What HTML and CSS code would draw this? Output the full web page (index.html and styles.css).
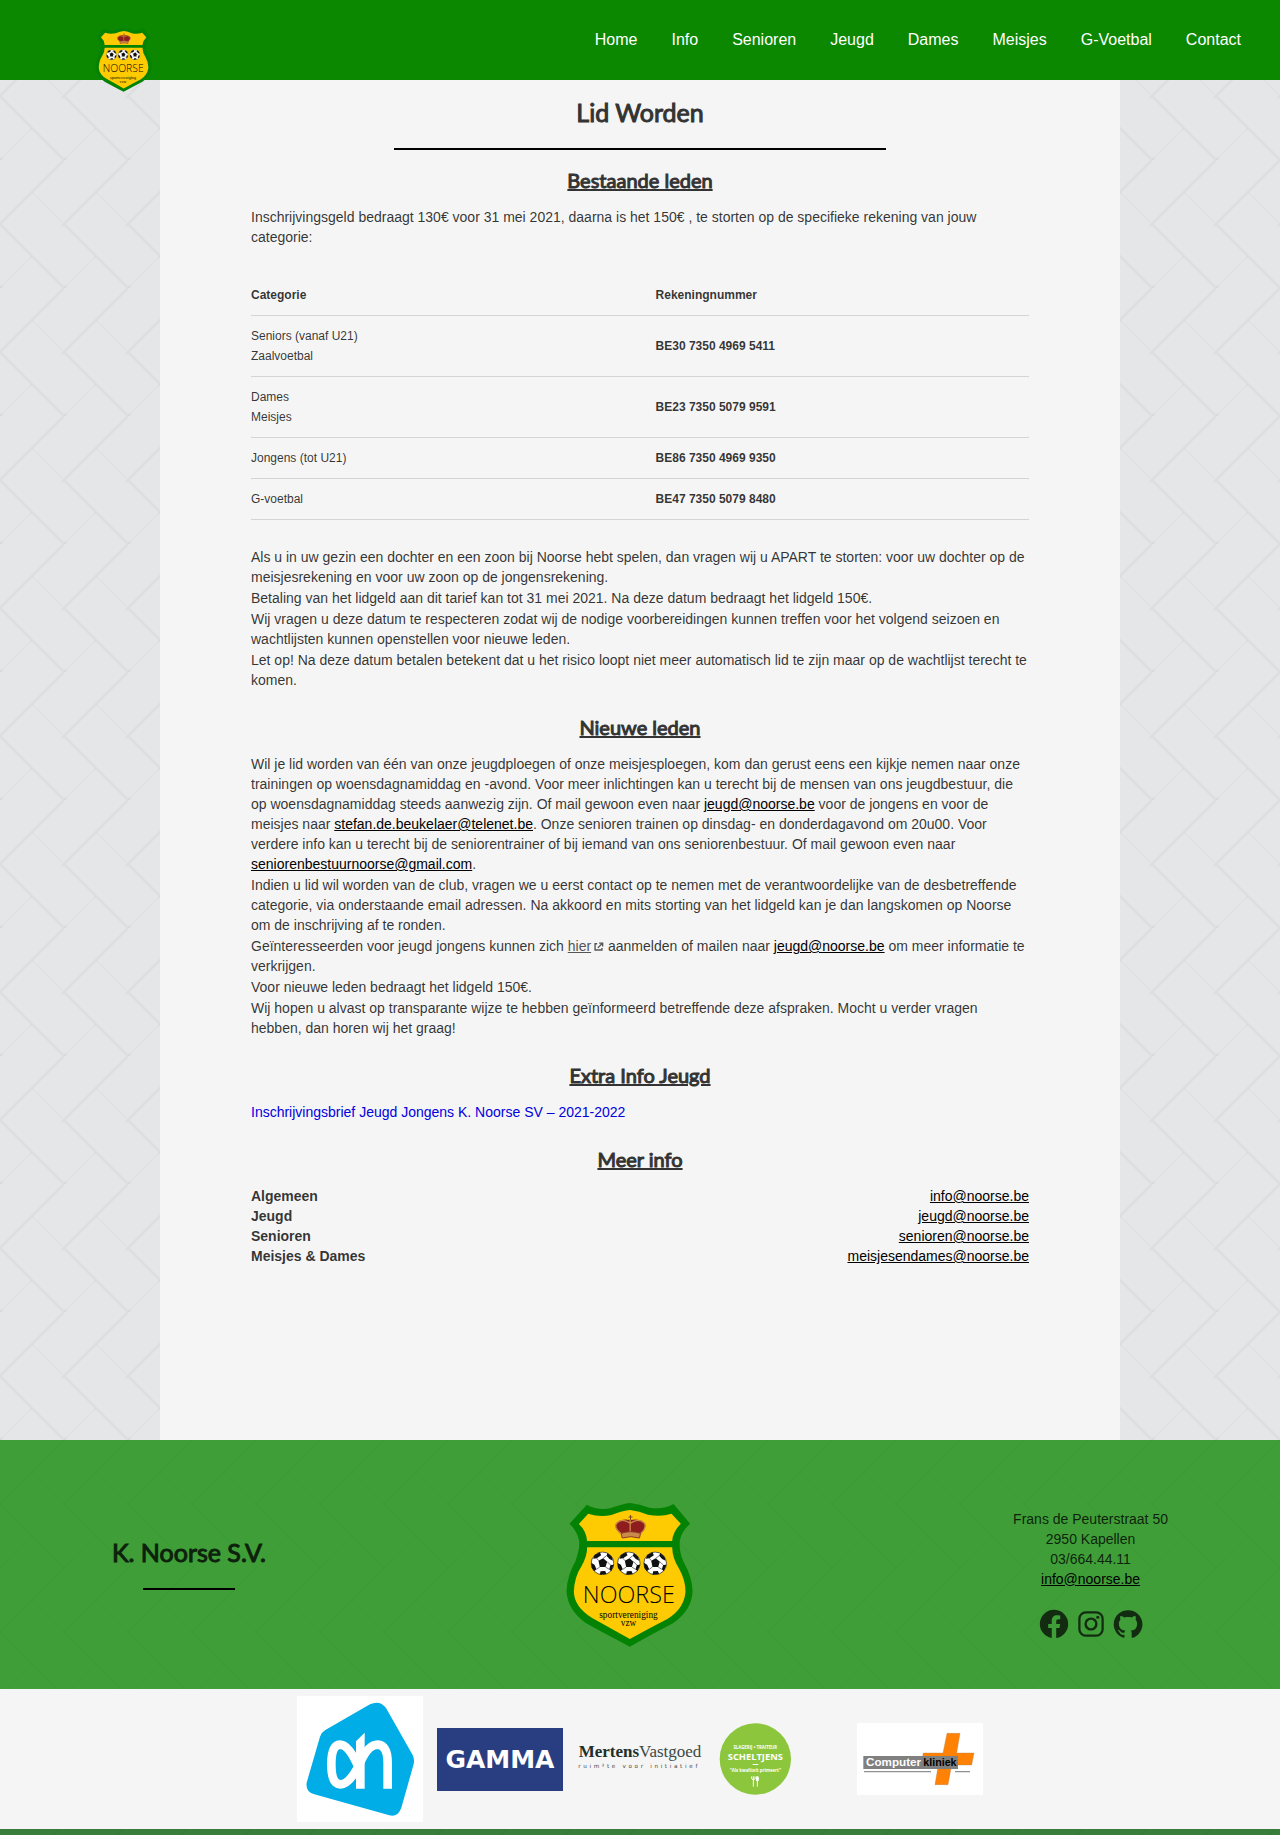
FILE: index.html
```html
<!DOCTYPE html>
<html lang="nl">
<head>
<meta charset="utf-8">
<meta name="viewport" content="width=device-width, initial-scale=1">
<title>Lid Worden – K. Noorse S.V.</title>
<link rel="stylesheet" href="styles.css">
</head>
<body>
<svg class="defs" aria-hidden="true">
  <defs>
    <symbol id="ball" viewBox="-36 -36 72 72">
      <circle r="34" fill="#fff" stroke="#111" stroke-width="2"/>
      <path d="M-12-8 2-15 14-5 9 11-8 11Z M-24-25-8-33-4-24-17-15-28-14Z M15-31 28-20 31-8 21-13 12-23Z M34 4 26 24 20 18 24 5Z M12 32-8 34-6 24 8 23Z M-34-2-24 4-18 18-25 24-32 14Z" fill="#111"/>
      <path d="M-12-8-17-15M2-15 12-23M14-5 24 5M9 11 20 18M-8 11-18 18" stroke="#333" stroke-width="2"/>
    </symbol>
    <symbol id="shield" viewBox="80 69 380 432">
      <path fill="#048204" d="M142 74Q175 92 212 85Q250 71 272 69Q300 72 330 83Q370 90 402 72L452 131Q425 155 421 182Q418 215 432 245Q460 295 459 335Q457 390 400 430Q335 464 271 500Q190 458 140 430Q85 390 81 335Q82 290 108 243Q122 205 119 182Q114 155 90 131Z"/>
      <path fill="#fecb02" d="M146 101Q180 112 216 105Q250 91 272 90Q300 93 325 104Q365 112 396 101L424 131Q400 155 398 183H143Q140 152 118 132Z"/>
      <path fill="#fecb02" d="M143 202H398Q399 236 418 265Q438 300 438 335Q434 385 385 416Q330 444 271 477Q210 443 158 414Q104 380 103 335Q105 290 125 260Q143 230 143 202Z"/>
      <path fill="#8f1d1d" d="M245 160Q222 145 230 130Q245 115 272 120Q302 115 316 130Q322 145 303 160Z"/>
      <path fill="none" stroke="#c98a4a" stroke-width="4" d="M246 162Q222 145 231 130Q248 112 272 130Q298 112 315 130Q322 145 302 162M272 118V160"/>
      <path fill="none" stroke="#7a4a20" stroke-width="3" d="M273 105V120M267 111H279"/>
      <path fill="#c98a4a" stroke="#8a3a2a" stroke-width="3" d="M245 160Q273 150 303 160L300 174Q273 166 248 174Z"/>
      <use href="#ball" x="153" y="214" width="72" height="72"/>
      <use href="#ball" x="232" y="214" width="72" height="72"/>
      <use href="#ball" x="311" y="214" width="72" height="72"/>
      <text class="shield-name" x="268" y="368" text-anchor="middle">NOORSE</text>
      <text class="shield-sub" x="267" y="415" text-anchor="middle">sportvereniging</text>
      <text class="shield-sub" x="267" y="437" text-anchor="middle">vzw</text>
    </symbol>
  </defs>
</svg>

<header class="topbar">
  <a class="brand" href="#" aria-label="K. Noorse S.V."><svg class="brand-logo" aria-hidden="true"><use href="#shield"/></svg></a>
  <nav class="menu">
    <a href="#">Home</a>
    <a href="#">Info</a>
    <a href="#">Senioren</a>
    <a href="#">Jeugd</a>
    <a href="#">Dames</a>
    <a href="#">Meisjes</a>
    <a href="#">G-Voetbal</a>
    <a href="#">Contact</a>
  </nav>
</header>

<main class="page">
  <h1 class="title">Lid Worden</h1>
  <hr class="rule">
  <section class="content">
    <h2>Bestaande leden</h2>
    <p>Inschrijvingsgeld bedraagt 130€ voor 31 mei 2021, daarna is het 150€ , te storten op de specifieke rekening van jouw categorie:</p>
    <table class="accounts">
      <thead>
        <tr><th>Categorie</th><th>Rekeningnummer</th></tr>
      </thead>
      <tbody>
        <tr><td>Seniors (vanaf U21)<br>Zaalvoetbal</td><td><strong>BE30 7350 4969 5411</strong></td></tr>
        <tr><td>Dames<br>Meisjes</td><td><strong>BE23 7350 5079 9591</strong></td></tr>
        <tr><td>Jongens (tot U21)</td><td><strong>BE86 7350 4969 9350</strong></td></tr>
        <tr><td>G-voetbal</td><td><strong>BE47 7350 5079 8480</strong></td></tr>
      </tbody>
    </table>
    <p>Als u in uw gezin een dochter en een zoon bij Noorse hebt spelen, dan vragen wij u APART te storten: voor uw dochter op de meisjesrekening en voor uw zoon op de jongensrekening.</p>
    <p>Betaling van het lidgeld aan dit tarief kan tot 31 mei 2021. Na deze datum bedraagt het lidgeld 150€.</p>
    <p>Wij vragen u deze datum te respecteren zodat wij de nodige voorbereidingen kunnen treffen voor het volgend seizoen en wachtlijsten kunnen openstellen voor nieuwe leden.</p>
    <p>Let op! Na deze datum betalen betekent dat u het risico loopt niet meer automatisch lid te zijn maar op de wachtlijst terecht te komen.</p>
  </section>
  <section class="content">
    <h2>Nieuwe leden</h2>
    <p>Wil je lid worden van één van onze jeugdploegen of onze meisjesploegen, kom dan gerust eens een kijkje nemen naar onze trainingen op woensdagnamiddag en -avond. Voor meer inlichtingen kan u terecht bij de mensen van ons jeugdbestuur, die op woensdagnamiddag steeds aanwezig zijn. Of mail gewoon even naar <a href="mailto:jeugd@noorse.be">jeugd@noorse.be</a> voor de jongens en voor de meisjes naar <a href="mailto:stefan.de.beukelaer@telenet.be">stefan.de.beukelaer@telenet.be</a>. Onze senioren trainen op dinsdag- en donderdagavond om 20u00. Voor verdere info kan u terecht bij de seniorentrainer of bij iemand van ons seniorenbestuur. Of mail gewoon even naar <a href="mailto:seniorenbestuurnoorse@gmail.com">seniorenbestuurnoorse@gmail.com</a>.</p>
    <p>Indien u lid wil worden van de club, vragen we u eerst contact op te nemen met de verantwoordelijke van de desbetreffende categorie, via onderstaande email adressen. Na akkoord en mits storting van het lidgeld kan je dan langskomen op Noorse om de inschrijving af te ronden.</p>
    <p>Geïnteresseerden voor jeugd jongens kunnen zich <a class="external" href="#">hier</a><svg class="external-icon" viewBox="0 0 16 16" aria-hidden="true"><path d="M6 4H3V13H13V10M9 3H14V8M14 3 7 10" fill="none" stroke="currentColor" stroke-width="2"/></svg> aanmelden of mailen naar <a href="mailto:jeugd@noorse.be">jeugd@noorse.be</a> om meer informatie te verkrijgen.</p>
    <p>Voor nieuwe leden bedraagt het lidgeld 150€.</p>
    <p>Wij hopen u alvast op transparante wijze te hebben geïnformeerd betreffende deze afspraken. Mocht u verder vragen hebben, dan horen wij het graag!</p>
  </section>
  <section class="content">
    <h2>Extra Info Jeugd</h2>
    <p><a class="document" href="#">Inschrijvingsbrief Jeugd Jongens K. Noorse SV – 2021-2022</a></p>
  </section>
  <section class="content">
    <h2>Meer info</h2>
    <dl class="contacts">
      <dt>Algemeen</dt><dd><a href="mailto:info@noorse.be">info@noorse.be</a></dd>
      <dt>Jeugd</dt><dd><a href="mailto:jeugd@noorse.be">jeugd@noorse.be</a></dd>
      <dt>Senioren</dt><dd><a href="mailto:senioren@noorse.be">senioren@noorse.be</a></dd>
      <dt>Meisjes &amp; Dames</dt><dd><a href="mailto:meisjesendames@noorse.be">meisjesendames@noorse.be</a></dd>
    </dl>
  </section>
</main>

<footer>
  <div class="club">
    <div class="club-name">
      <h2>K. Noorse S.V.</h2>
      <hr class="rule">
    </div>
    <svg class="club-logo" role="img" aria-label="Logo K. Noorse S.V."><use href="#shield"/></svg>
    <div class="club-contact">
      <address>Frans de Peuterstraat 50<br>2950 Kapellen<br>03/664.44.11<br><a href="mailto:info@noorse.be">info@noorse.be</a></address>
      <div class="social">
        <a href="#" aria-label="Facebook"><svg viewBox="0 0 24 24"><path d="M22 12A10 10 0 1 0 10.400 21.880V14.900H7.900V12H10.400V9.800C10.400 7.300 11.900 5.900 14.200 5.900 15.300 5.900 16.400 6.100 16.400 6.100V8.600H15.200C13.900 8.600 13.560 9.300 13.560 10.100V12H16.300L15.900 14.900H13.560V21.880A10 10 0 0 0 22 12Z"/></svg></a>
        <a href="#" aria-label="Instagram"><svg viewBox="0 0 24 24"><rect x="3.800" y="3.800" width="16.400" height="16.400" rx="4.500" fill="none" stroke="currentColor" stroke-width="1.600"/><circle cx="12" cy="12" r="3.800" fill="none" stroke="currentColor" stroke-width="1.700"/><circle cx="16.800" cy="7.200" r="1.100"/></svg></a>
        <a href="#" aria-label="GitHub"><svg viewBox="-1.200 -1.200 26.400 26.400"><path d="M12 1.270a11 11 0 00-3.480 21.460c.55.090.73-.28.73-.55v-1.840c-3.030.64-3.670-1.460-3.670-1.460-.55-1.290-1.280-1.650-1.280-1.650-.92-.65.1-.65.1-.65 1.100 0 1.730 1.100 1.730 1.100.92 1.650 2.570 1.200 3.210.92a2 2 0 01.64-1.470c-2.470-.27-5.040-1.190-5.040-5.500 0-1.100.46-2.100 1.200-2.840a3.760 3.760 0 010-2.930s.91-.28 3.110 1.100c1.800-.49 3.700-.49 5.500 0 2.100-1.380 3.020-1.100 3.020-1.100a3.760 3.760 0 01.1 2.930c.83.74 1.200 1.740 1.200 2.940 0 4.210-2.570 5.130-5.040 5.400.45.37.82.92.82 2.020v3.030c0 .27.1.64.73.55A11 11 0 0012 1.270"/></svg></a>
      </div>
    </div>
  </div>

  <div class="sponsors">
    <a href="#" aria-label="Albert Heijn"><svg viewBox="0 0 378 378">
      <rect width="378" height="378" fill="#fff"/>
      <g transform="translate(-51 -48)">
        <path fill="#00ade6" d="M270 73Q300 60 318 84L398 225Q405 240 400 256L364 383Q354 412 328 406L103 343Q76 335 80 308L120 170Q124 157 136 150Z"/>
        <path fill="none" stroke="#fff" stroke-width="26" d="M236 262Q206 194 180 194Q154 196 154 253Q154 313 182 313Q206 313 236 258Q262 194 293 194Q323 196 323 250V326"/>
        <path fill="#fff" d="M228 326V184L254 158V326Z"/>
      </g>
    </svg></a>
    <a href="#" aria-label="Gamma"><svg viewBox="0 0 378 189">
      <rect width="378" height="189" fill="#293e80"/>
      <text class="gamma" x="189" y="120" text-anchor="middle">GAMMA</text>
    </svg></a>
    <a href="#" aria-label="Mertens Vastgoed"><svg viewBox="0 0 378 120">
      <text class="mertens" x="189" y="54" text-anchor="middle"><tspan class="mertens-bold">Mertens</tspan>Vastgoed</text>
      <text class="mertens-tag" x="4" y="88">ruim²te voor initiatief</text>
    </svg></a>
    <a href="#" aria-label="Scheltjens"><svg viewBox="0 0 378 216">
      <circle cx="115" cy="108" r="107" fill="#8cc63c"/>
      <g fill="#fff" text-anchor="middle">
        <text class="schel-small" x="115" y="79">SLAGERIJ • TRAITEUR</text>
        <text class="schel-name" x="115" y="112">SCHELTJENS</text>
        <rect x="107" y="123" width="17" height="3"/>
        <text class="schel-small" x="115" y="147">"Als kwaliteit primeert"</text>
      </g>
      <path fill="none" stroke="#fff" stroke-width="3" d="M109 160V191M121 168V191M104 160V167Q109 176 114 167V160"/>
      <ellipse cx="121" cy="167" rx="5" ry="8" fill="#fff"/>
    </svg></a>
    <a href="#" aria-label="Computerkliniek"><svg viewBox="0 0 378 216">
      <rect width="378" height="216" fill="#fff"/>
      <path fill="#ff8205" stroke="#a5794a" stroke-width="1" d="M270 31H309L299 90H351L344 126H284L273 185H234L244 126H192L199 90H258Z"/>
      <rect x="19" y="99" width="284" height="39" fill="#808080"/>
      <path stroke="#909090" stroke-width="4" d="M21 146H222M294 146H339"/>
      <text class="computer" x="27" y="129" fill="#fff">Computer</text>
      <text class="kliniek" x="199" y="129">kliniek</text>
    </svg></a>
  </div>
  <div class="baseline"></div>
</footer>
</body>
</html>
```
FILE: styles.css
```css
* {
  box-sizing: border-box;
}

body {
  margin: 0;
  color: rgba(0, 0, 0, 0.8);
  font: 14px/20px "Liberation Sans", Arial, sans-serif;
  background: #e4e6e8 url("data:image/svg+xml,%3Csvg xmlns='http://www.w3.org/2000/svg' width='64' height='128'%3E%3Cg fill='none' stroke='%23000' stroke-opacity='.04'%3E%3Cpath stroke-width='2' d='M0 0L64 64L0 128M-2 -2L0 0M64 128L66 130M64 0L62 2M0 64L2 62'/%3E%3Cpath stroke-width='1' d='M32 32L0 64M32 96L64 128'/%3E%3C/g%3E%3C/svg%3E") 0 96px;
}

a {
  color: #000;
}

h1,
h2,
p,
dl,
dd {
  margin: 0;
}

.defs {
  display: block;
  width: 0;
  height: 0;
}

/* Header */
.topbar {
  display: flex;
  align-items: center;
  justify-content: space-between;
  height: 80px;
  padding: 0 39px 0 95px;
  background: #0b8700;
}

.brand {
  align-self: flex-start;
  margin-top: 28px;
}

.brand-logo {
  display: block;
  width: 57px;
  height: 64px;
}

.menu {
  display: flex;
  gap: 34px;
  font-size: 16px;
}

.menu a {
  color: #fff;
  text-decoration: none;
}

/* Page */
.page {
  width: 75%;
  margin: 0 auto;
  padding: 16px 0 150px;
  background: #f5f5f5;
}

.title,
.content h2,
.club-name h2 {
  color: #333;
  font-family: Lato, sans-serif;
  font-weight: 400;
  text-align: center;
  -webkit-text-stroke: 1px currentColor;
}

.title,
.club-name h2 {
  font-size: 25px;
  line-height: 32px;
}

.rule {
  width: 492px;
  max-width: 100%;
  height: 2px;
  margin: 20px auto 17px;
  border: 0;
  background: #000;
}

.content {
  width: 778px;
  max-width: 90%;
  margin: 0 auto 24px;
}

.content h2 {
  margin-bottom: 14px;
  font-size: 20px;
  line-height: 26px;
  text-decoration: underline;
}

.content p + p {
  margin-top: 1px;
}

.external {
  color: #555;
}

.external-icon {
  width: 11px;
  height: 11px;
  margin-left: 2px;
  color: #555;
  vertical-align: -1px;
}

.document {
  color: #0000e0;
  text-decoration: none;
}

.accounts {
  width: 100%;
  margin: 28px 0 27px;
  border-collapse: collapse;
  font-size: 12px;
}

.accounts th,
.accounts td {
  padding: 10px 0;
  border-bottom: 1px solid #d4d4d4;
  text-align: left;
}

.accounts th:first-child {
  width: 52%;
}

.contacts {
  display: grid;
  grid-template-columns: 1fr auto;
}

.contacts dt {
  font-weight: 700;
}

.contacts dd {
  text-align: right;
}

/* Footer */
.club {
  display: flex;
  align-items: center;
  justify-content: space-between;
  min-height: 249px;
  padding: 20px 112px 0;
  background: rgba(11, 135, 0, 0.76);
}

.club-name h2 {
  color: #0d210c;
}

.club-name .rule {
  width: 60%;
  margin-bottom: 24px;
}

.club-logo {
  width: 127px;
  height: 144px;
  margin-right: 20px;
}

.club-contact {
  text-align: center;
}

.club-contact address {
  font-style: normal;
}

.social {
  display: flex;
  justify-content: center;
  gap: 3px;
  margin-top: 18px;
}

.social a {
  color: #132c11;
}

.social svg {
  display: block;
  width: 34px;
  height: 34px;
  fill: currentColor;
}

.sponsors {
  display: flex;
  align-items: center;
  justify-content: center;
  gap: 14px;
  min-height: 140px;
  padding: 7px;
  background: #f5f5f5;
}

.sponsors svg {
  display: block;
  width: 126px;
}

.baseline {
  height: 6px;
  background: rgba(10, 95, 9, 0.78);
}

/* Lettering inside the logos */
.shield-name {
  font: 300 70px "Open Sans", sans-serif;
}

.shield-sub {
  font: 28px "Liberation Serif", serif;
}

.gamma {
  fill: #fff;
  font: 700 75px "DejaVu Sans", sans-serif;
}

.mertens {
  fill: #3a4a46;
  font: 51px "Liberation Serif", serif;
}

.mertens-bold {
  fill: #1d302b;
  font-weight: 700;
}

.mertens-tag {
  fill: #444;
  font: 17px "DejaVu Sans", sans-serif;
  letter-spacing: 8px;
}

.schel-small {
  font: 700 13px "Open Sans", sans-serif;
}

.schel-name {
  font: 700 28px "Open Sans", sans-serif;
}

.computer {
  font: 700 35px "Liberation Sans", sans-serif;
}

.kliniek {
  font: 700 32px "Liberation Sans", sans-serif;
}
```
